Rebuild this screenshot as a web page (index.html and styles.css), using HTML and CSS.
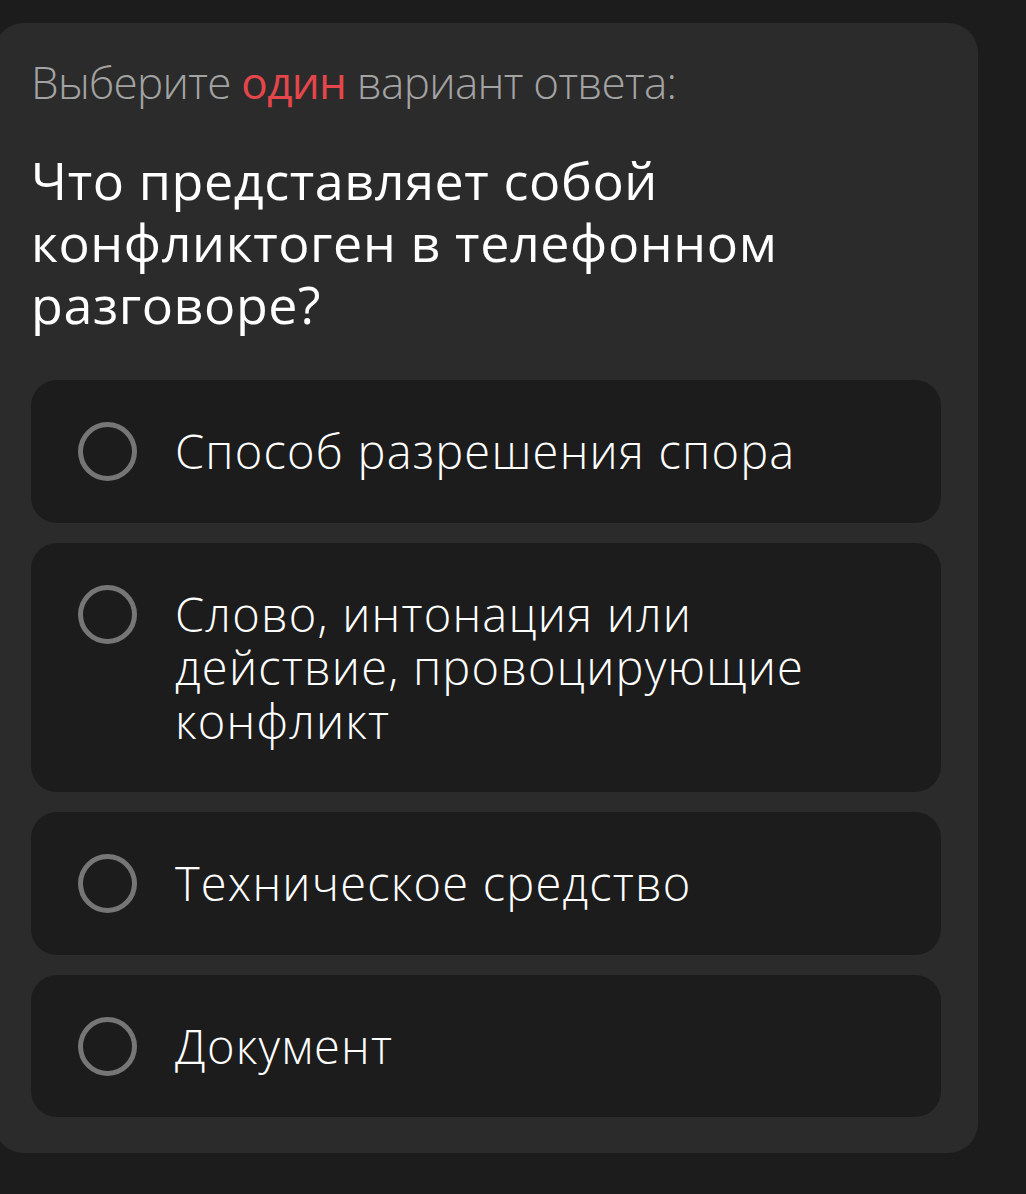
FILE: index.html
```html
<!DOCTYPE html>
<html lang="ru">
<head>
    <meta charset="UTF-8">
    <meta name="viewport" content="width=device-width, initial-scale=1.0">
    <title>Тест</title>
    <link rel="stylesheet" href="styles.css">
</head>
<body>
    <div class="quiz-card">
        <p class="hint">Выберите <span class="accent">один</span> вариант ответа:</p>
        <h2 class="question">Что представляет собой конфликтоген в телефонном разговоре?</h2>

        <div class="options">
            <div class="option">
                <span class="radio"></span>
                <span class="option-text">Способ разрешения спора</span>
            </div>
            <div class="option">
                <span class="radio"></span>
                <span class="option-text">Слово, интонация или действие, провоцирующие конфликт</span>
            </div>
            <div class="option">
                <span class="radio"></span>
                <span class="option-text">Техническое средство</span>
            </div>
            <div class="option">
                <span class="radio"></span>
                <span class="option-text">Документ</span>
            </div>
        </div>
    </div>
</body>
</html>
```

FILE: styles.css
```css
body {
    margin: 0;
    padding-top: 23px;
    height: 1194px;
    box-sizing: border-box;
    background: #1c1c1c;
    font-family: "Open Sans", "Noto Sans", sans-serif;
    overflow: hidden;
}
.quiz-card {
    width: 984px;
    margin-left: -6px;
    box-sizing: border-box;
    padding: 33px 37px 36px;
    background: #2b2b2b;
    border-radius: 30px;
}
.hint {
    margin: 0;
    font-size: 44px;
    line-height: 52px;
    font-weight: 300;
    letter-spacing: -0.7px;
    color: #a3a3a3;
}
.accent {
    color: #e5464c;
    font-weight: 400;
}
.question {
    margin: 41px 0 45px;
    font-size: 52px;
    line-height: 62px;
    font-weight: 400;
    letter-spacing: 0.6px;
    color: #fff;
    padding-right: 150px;
}
.options {
    display: flex;
    flex-direction: column;
    gap: 20px;
}
.option {
    display: flex;
    align-items: flex-start;
    gap: 38px;
    padding: 45px 40px 44px 47px;
    background: #1c1c1c;
    border-radius: 26px;
}
.radio {
    flex: none;
    width: 59px;
    height: 59px;
    margin: -3px 0;
    box-sizing: border-box;
    border: 5px solid #767676;
    border-radius: 50%;
}
.option-text {
    font-size: 47px;
    line-height: 53.5px;
    font-weight: 300;
    letter-spacing: 1.2px;
    color: #fff;
    padding-right: 60px;
}
```
